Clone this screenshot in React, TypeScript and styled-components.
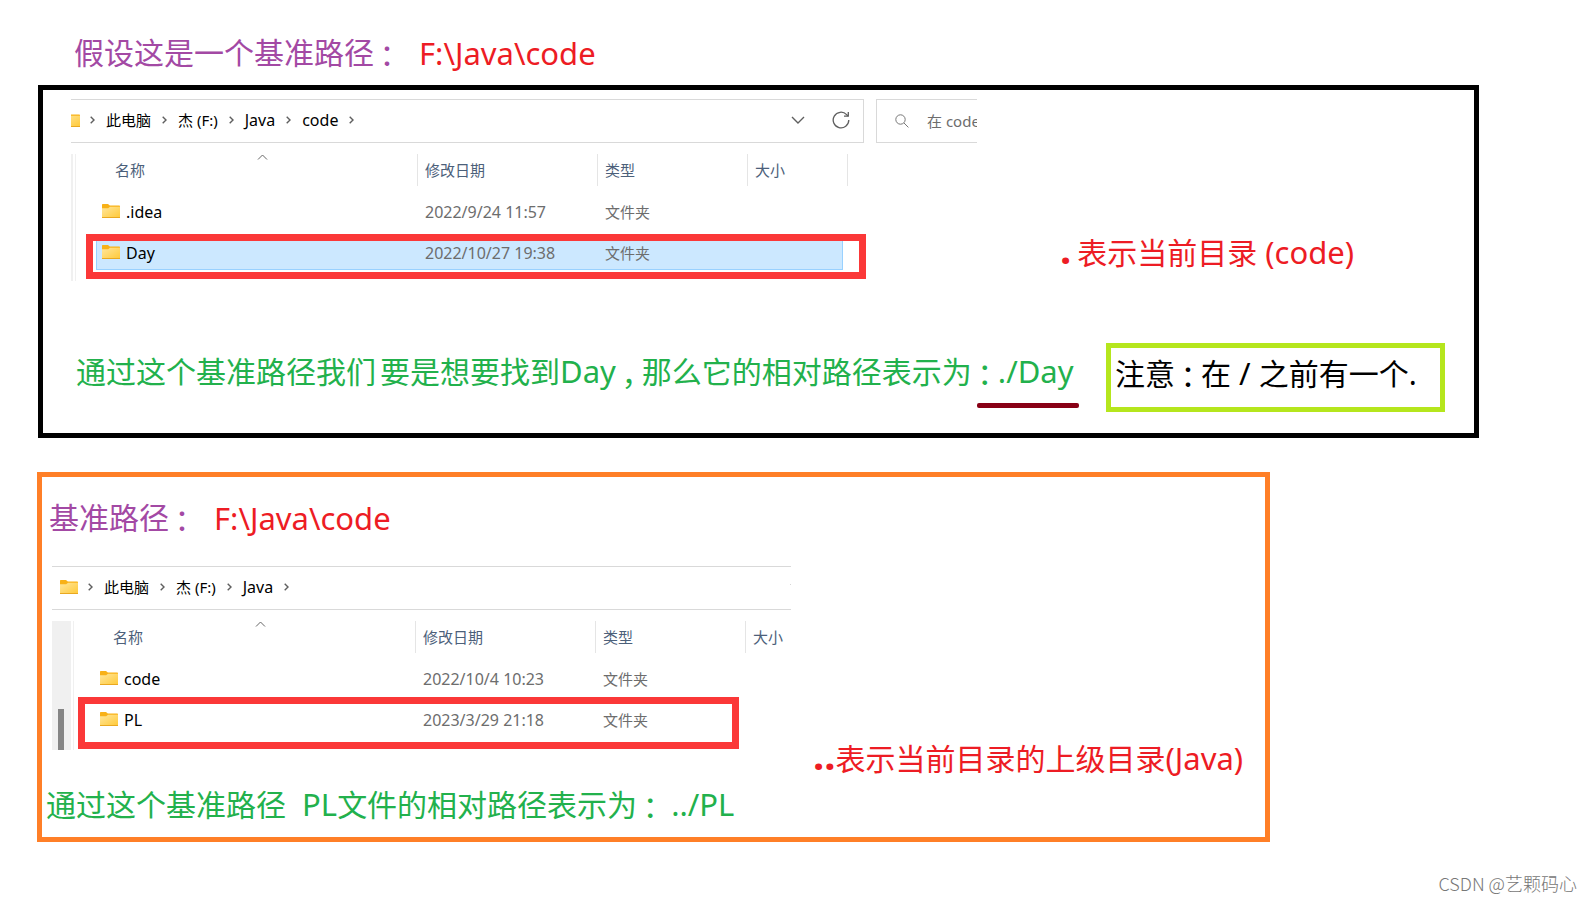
import React from "react";
import styled, { createGlobalStyle } from "styled-components";

const latinCjk = `"Noto Sans", "Noto Sans CJK SC", sans-serif`;

const GlobalStyle = createGlobalStyle`
  * { box-sizing: border-box; }
  body { margin: 0; background: #fff; font-family: ${latinCjk}; }
`;

const Page = styled.main`
  min-height: 100vh;
  display: flex;
  flex-direction: column;
  padding: 33px 113px 0 37px;
`;

const Title = styled.h1<{ $inset: number }>`
  margin: 0;
  padding-left: ${(p) => p.$inset}px;
  font-size: 30px;
  font-weight: 400;
  line-height: 40px;
  color: #a349a4;
  white-space: nowrap;
  display: flex;
  gap: 19px;
`;

const Latin = styled.span`
  font-size: 31px;
  line-height: 1;
`;

const PathText = styled.span`
  font-size: 31px;
  color: #ed1c24;
`;

/* Full-width punctuation, centred in its cell and lowered to the baseline. */
const Punct = styled.span<{ $drop?: number }>`
  font-family: "Noto Sans CJK TC", sans-serif;
  line-height: 1;
  margin: 0 -2px;
  vertical-align: -${(p) => p.$drop ?? 3}px;
`;

const Statement = styled.p`
  margin: 0;
  display: flex;
  font-size: 30px;
  line-height: 40px;
  color: #22b14c;
  white-space: nowrap;
`;

const Note = styled.p`
  margin: 0;
  align-self: flex-end;
  display: flex;
  align-items: baseline;
  font-size: 30px;
  line-height: 40px;
  color: #ed1c24;
  white-space: nowrap;
`;

const Dots = styled.b`
  font-size: 40px;
  line-height: 1;
  font-weight: 700;
`;

const Underlined = styled.span`
  position: relative;
  &::after {
    content: "";
    position: absolute;
    left: 5px;
    right: -5px;
    bottom: -16px;
    height: 5px;
    border-radius: 2px;
    background: #880015;
  }
`;

const CurrentDir = styled.section`
  margin: 12px 0 0 1px;
  border: 5px solid #000;
  padding: 9px 28px 21px;
`;

const ParentDir = styled.section`
  margin: 34px 209px 0 0;
  border: 5px solid #ff7f27;
  padding: 21px 18px 12px 4px;
  display: flex;
  gap: 22px;
  & > ${Note} { margin-bottom: 46px; }
`;

const Column = styled.div`
  display: flex;
  flex-direction: column;
  gap: 28px;
  & > ${Statement} { margin-top: 7px; }
`;

const ExplorerRow = styled.div`
  display: flex;
  gap: 83px;
  & > ${Note} { margin-bottom: 8px; gap: 6px; }
`;

const StatementRow = styled.div`
  display: flex;
  justify-content: space-between;
  margin: 62px 0 0 5px;
  padding-right: 1px;
  & > ${Statement} { padding-top: 9px; gap: 4px; }
`;

const Reminder = styled.aside`
  width: 339px;
  border: 5px solid #b5e61d;
  padding: 6px 4px 13px;
  font-size: 30px;
  line-height: 40px;
  color: #000;
  white-space: nowrap;
`;

const Window = styled.div<{ $width: number; $inset?: number }>`
  flex: none;
  width: ${(p) => p.$width}px;
  margin-left: ${(p) => p.$inset ?? 0}px;
  overflow: hidden;
`;

const Toolbar = styled.div`
  display: flex;
  gap: 12px;
  height: 44px;
`;

const AddressBar = styled.nav<{ $width: number; $pad: number }>`
  flex: none;
  width: ${(p) => p.$width}px;
  border: 1px solid #d9d9d9;
  border-left: 0;
  padding: 0 13px 2px ${(p) => p.$pad}px;
  display: flex;
  align-items: center;
  gap: 11px;
  color: #5f5f5f;
  & > svg:first-child { margin-right: -1px; }
`;

const Crumb = styled.a<{ $latin?: boolean }>`
  font-size: ${(p) => (p.$latin ? 16 : 15)}px;
  line-height: 24px;
  color: #000;
  text-decoration: none;
  white-space: nowrap;
`;

const BarActions = styled.div`
  margin-left: auto;
  display: flex;
  align-items: center;
  gap: 27px;
`;

const IconButton = styled.button`
  display: flex;
  border: 0;
  padding: 0;
  background: none;
  color: #5f5f5f;
`;

const SearchBox = styled.label`
  flex: 1;
  min-width: 0;
  border: 1px solid #d9d9d9;
  border-right: 0;
  padding-left: 18px;
  display: flex;
  align-items: center;
  gap: 18px;
  color: #777;
`;

const SearchInput = styled.input`
  flex: 1;
  min-width: 0;
  border: 0;
  padding: 0;
  outline: 0;
  background: none;
  font-family: inherit;
  font-size: 15px;
  line-height: 24px;
  &::placeholder { color: #6d6d6d; opacity: 1; }
`;

const Body = styled.div<{ $height: number }>`
  position: relative;
  display: flex;
  margin-top: 11px;
  min-height: ${(p) => p.$height}px;
`;

const Gutter = styled.div<{ $width: number }>`
  flex: none;
  width: ${(p) => p.$width}px;
  margin-right: 2px;
  background: #f0f0f0;
  display: flex;
  align-items: flex-end;
`;

const Thumb = styled.div`
  width: 6px;
  height: 41px;
  margin-left: 6px;
  background: #858585;
`;

const Divider = styled.div`
  flex: none;
  width: 1px;
  margin-right: 20px;
  background: #f0f0f0;
`;

const Files = styled.table`
  flex: none;
  align-self: flex-start;
  width: 752px;
  margin-top: -5px;
  table-layout: fixed;
  border-collapse: separate;
  border-spacing: 0 5px;
  text-align: left;
`;

const HeadCell = styled.th<{ $width: number }>`
  width: ${(p) => p.$width}px;
  padding: 0 0 2px;
  font-weight: 400;
`;

const HeadLabel = styled.div<{ $pad: number }>`
  position: relative;
  height: 32px;
  padding-left: ${(p) => p.$pad}px;
  border-right: 1px solid #e5e5e5;
  font-size: 15px;
  line-height: 32px;
  color: #4c607a;
`;

const SortMark = styled.svg`
  position: absolute;
  top: 0;
  left: 50%;
`;

const Row = styled.tr<{ $selected?: boolean }>`
  & > td {
    height: 36px;
    padding: 2px 0 0 7px;
    line-height: 24px;
    font-size: 15px;
    color: #6d6d6d;
    background: ${(p) => (p.$selected ? "#cce8ff" : "none")};
    box-shadow: ${(p) => (p.$selected ? "inset 0 -1px 0 #99d1ff" : "none")};
  }
  & > td:first-child {
    padding-left: 6px;
    box-shadow: ${(p) => (p.$selected ? "inset 1px -1px 0 #99d1ff" : "none")};
  }
  & > td:last-child {
    border-right: 5px solid transparent;
    background-clip: padding-box;
    box-shadow: ${(p) => (p.$selected ? "inset -1px -1px 0 #99d1ff" : "none")};
  }
`;

const FileName = styled.span`
  display: flex;
  align-items: center;
  gap: 6px;
  font-size: 16px;
  color: #000;
  & > svg { margin-bottom: 2px; }
`;

const FileDate = styled.time`
  font-size: 16px;
`;

const Highlight = styled.div<{ $x: number; $y: number; $w: number; $h: number }>`
  position: absolute;
  left: ${(p) => p.$x}px;
  top: ${(p) => p.$y}px;
  width: ${(p) => p.$w}px;
  height: ${(p) => p.$h}px;
  border: 7px solid #fb3838;
`;

const Watermark = styled.footer`
  margin: auto -98px 8px 0;
  text-align: right;
  font-family: "Noto Sans CJK SC", sans-serif;
  font-size: 18px;
  font-weight: 300;
  line-height: 24px;
  color: #777;
`;

const FolderIcon = ({ half }: { half?: boolean }) => (
  <svg width={half ? 9 : 18} height="14" viewBox={half ? "9 0 9 14" : "0 0 18 14"} style={{ flex: "none" }} aria-hidden="true">
    <defs>
      <linearGradient id="folder" x1="0" y1="0" x2="1" y2="1">
        <stop offset="0" stopColor="#ffe69c" />
        <stop offset="1" stopColor="#ffc937" />
      </linearGradient>
    </defs>
    <path d="M0 0.7Q0 0 0.7 0H6L7.8 1.6H17.3Q18 1.6 18 2.4V6H0Z" fill="#f8b117" />
    <path d="M0 4.2H6.2L8 2.7H18V13.3Q18 14 17.3 14H0.7Q0 14 0 13.3Z" fill="url(#folder)" />
    <path d="M0 13.5H18" stroke="#e9a820" />
  </svg>
);

const Chevron = () => (
  <svg width="5" height="8" viewBox="0 0 5 8" fill="none" stroke="#5f5f5f" strokeWidth="1.4" style={{ flex: "none" }} aria-hidden="true">
    <path d="M0.7 0.7L4 4L0.7 7.3" />
  </svg>
);

type Crumbs = { text: string; latin?: boolean }[];

const Address = ({ crumbs, width, pad, half }: { crumbs: Crumbs; width: number; pad: number; half?: boolean }) => (
  <AddressBar $width={width} $pad={pad}>
    <FolderIcon half={half} />
    <Chevron />
    {crumbs.map((c) => (
      <React.Fragment key={c.text}>
        <Crumb href="#" $latin={c.latin}>{c.text}</Crumb>
        <Chevron />
      </React.Fragment>
    ))}
    <BarActions>
      <IconButton aria-label="展开">
        <svg width="14" height="8" viewBox="0 0 14 8" fill="none" stroke="currentColor" strokeWidth="1.4">
          <path d="M1 1L7 7L13 1" />
        </svg>
      </IconButton>
      <IconButton aria-label="刷新">
        <svg width="18" height="18" viewBox="0 0 18 18" fill="none" stroke="currentColor" strokeWidth="1.3">
          <path d="M16.8 9A7.8 7.8 0 1 1 14.6 3.6L16 5" />
          <path d="M16.3 1V5.2H12" />
        </svg>
      </IconButton>
    </BarActions>
  </AddressBar>
);

type File = { name: string; date: string; selected?: boolean };

const FileTable = ({ files }: { files: File[] }) => (
  <Files>
    <thead>
      <tr>
        <HeadCell $width={322}>
          <HeadLabel $pad={19}>
            名称
            <SortMark width="11" height="6" viewBox="0 0 11 6" fill="none" stroke="#666">
              <path d="M1 5.5L5.5 1L10 5.5" />
            </SortMark>
          </HeadLabel>
        </HeadCell>
        <HeadCell $width={180}><HeadLabel $pad={7}>修改日期</HeadLabel></HeadCell>
        <HeadCell $width={150}><HeadLabel $pad={7}>类型</HeadLabel></HeadCell>
        <HeadCell $width={100}><HeadLabel $pad={7}>大小</HeadLabel></HeadCell>
      </tr>
    </thead>
    <tbody>
      {files.map((f) => (
        <Row key={f.name} $selected={f.selected}>
          <td><FileName><FolderIcon />{f.name}</FileName></td>
          <td><FileDate>{f.date}</FileDate></td>
          <td>文件夹</td>
          <td />
        </Row>
      ))}
    </tbody>
  </Files>
);

const drive: Crumbs = [{ text: "此电脑" }, { text: "杰 (F:)" }, { text: "Java", latin: true }];

export default function App() {
  return (
    <>
      <GlobalStyle />
      <Page>
        <Title $inset={37}>
          <span>假设这是一个基准路径<Punct>：</Punct></span>
          <PathText>F:\Java\code</PathText>
        </Title>

        <CurrentDir>
          <ExplorerRow>
            <Window $width={906}>
              <Toolbar>
                <Address crumbs={[...drive, { text: "code", latin: true }]} width={793} pad={0} half />
                <SearchBox>
                  <svg width="14" height="14" viewBox="0 0 14 14" fill="none" stroke="currentColor" style={{ flex: "none" }} aria-hidden="true">
                    <circle cx="5.5" cy="5.5" r="4.7" />
                    <path d="M9 9L13.4 13.4" />
                  </svg>
                  <SearchInput type="text" aria-label="搜索" placeholder="在 code 中搜索" />
                </SearchBox>
              </Toolbar>
              <Body $height={127}>
                <Gutter $width={2} />
                <Divider />
                <FileTable
                  files={[
                    { name: ".idea", date: "2022/9/24 11:57" },
                    { name: "Day", date: "2022/10/27 19:38", selected: true },
                  ]}
                />
                <Highlight $x={15} $y={80} $w={780} $h={45} />
              </Body>
            </Window>
            <Note><Dots>.</Dots><span>表示当前目录<Latin> (code)</Latin></span></Note>
          </ExplorerRow>
          <StatementRow>
            <Statement>
              <span>通过这个基准路径我们</span>
              <span>
                要是想要找到<Latin>Day</Latin><Punct $drop={11}>，</Punct>那么它的相对路径表示为<Underlined><Punct>：</Punct><Latin>./Day</Latin></Underlined>
              </span>
            </Statement>
            <Reminder>注意<Punct>：</Punct>在<Latin> / </Latin>之前有一个.</Reminder>
          </StatementRow>
        </CurrentDir>

        <ParentDir>
          <Column>
            <Title as="h2" $inset={3}>
              <span>基准路径<Punct>：</Punct></span>
              <PathText>F:\Java\code</PathText>
            </Title>
            <Window $width={739} $inset={6}>
              <Toolbar>
                <Address crumbs={drive} width={811} pad={8} />
              </Toolbar>
              <Body $height={129}>
                <Gutter $width={19}><Thumb /></Gutter>
                <Divider />
                <FileTable
                  files={[
                    { name: "code", date: "2022/10/4 10:23" },
                    { name: "PL", date: "2023/3/29 21:18" },
                  ]}
                />
                <Highlight $x={26} $y={76} $w={661} $h={52} />
              </Body>
            </Window>
            <Statement>
              <span>通过这个基准路径<Latin>&nbsp; PL</Latin>文件的相对路径表示为<Punct>：</Punct><Latin>&nbsp;../PL</Latin></span>
            </Statement>
          </Column>
          <Note><Dots>..</Dots><span>表示当前目录的上级目录<Latin>(Java)</Latin></span></Note>
        </ParentDir>

        <Watermark>CSDN @艺颗码心</Watermark>
      </Page>
    </>
  );
}
